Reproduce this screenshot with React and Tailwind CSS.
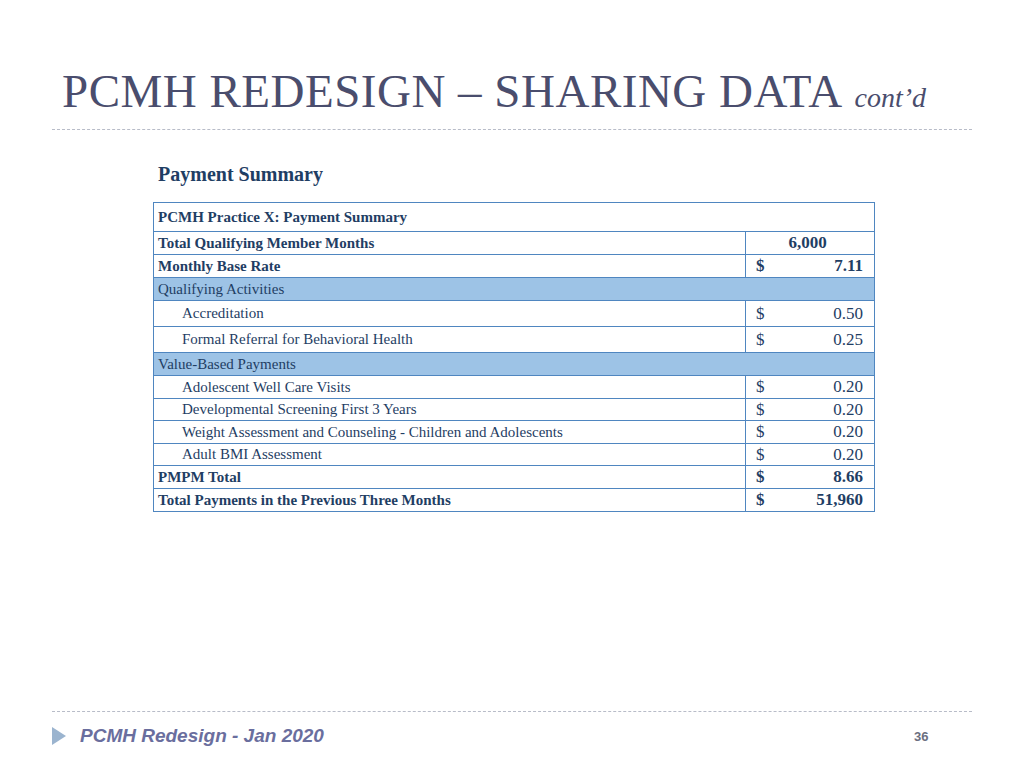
const rows = [
  { label: 'Total Qualifying Member Months', value: '6,000', bold: true, center: true, h: 'h-[23px]' },
  { label: 'Monthly Base Rate', dollar: true, value: '7.11', bold: true, h: 'h-[23px]' },
  { label: 'Qualifying Activities', band: true, h: 'h-[23px]' },
  { label: 'Accreditation', dollar: true, value: '0.50', indent: true, h: 'h-[26px]' },
  { label: 'Formal Referral for Behavioral Health', dollar: true, value: '0.25', indent: true, h: 'h-[26px]' },
  { label: 'Value-Based Payments', band: true, h: 'h-[23px]' },
  { label: 'Adolescent Well Care Visits', dollar: true, value: '0.20', indent: true, h: 'h-[23px]' },
  { label: 'Developmental Screening First 3 Years', dollar: true, value: '0.20', indent: true, h: 'h-[22px]' },
  { label: 'Weight Assessment and Counseling - Children and Adolescents', dollar: true, value: '0.20', indent: true, h: 'h-[23px]' },
  { label: 'Adult BMI Assessment', dollar: true, value: '0.20', indent: true, h: 'h-[22px]' },
  { label: 'PMPM Total', dollar: true, value: '8.66', bold: true, h: 'h-[23px]' },
  { label: 'Total Payments in the Previous Three Months', dollar: true, value: '51,960', bold: true, h: 'h-[22px]' },
];

const App = () => {
  return (
    <div className="w-[1024px] h-[768px] bg-white relative overflow-hidden" style={{ fontFamily: '"Liberation Serif", serif' }}>
      <div className="pt-[68px] pl-[62px] flex items-baseline text-[#4a4d6d]">
        <span className="text-[47px] leading-none tracking-[0.5px]">PCMH REDESIGN – SHARING DATA</span>
        <span className="text-[28px] italic ml-3 leading-none">cont’d</span>
      </div>
      <div className="mx-[52px] mt-[14px] border-t border-dashed border-[#b8bcc8]" />

      <div className="ml-[158px] mt-[34px] text-[#1f3e64] font-bold text-[20px] leading-none">Payment Summary</div>

      <div className="ml-[153px] mt-[18px] w-[722px] border border-[#4f86c0] text-[#1f3e64]">
        <div className="h-[29px] flex items-center px-1 font-bold text-[15px] border-b border-[#4f86c0]">PCMH Practice X: Payment Summary</div>
        {rows.map((r, i) => (
          <div
            key={i}
            className={`flex ${r.h} text-[15px] ${i < rows.length - 1 ? 'border-b border-[#4f86c0]' : ''} ${r.band ? 'bg-[#9dc3e6]' : ''} ${r.bold ? 'font-bold' : ''}`}
          >
            <div className={`flex-1 flex items-center ${r.indent ? 'pl-[28px]' : 'pl-1'}`}>{r.label}</div>
            {!r.band && (
              <div className="w-[129px] border-l border-[#4f86c0] flex items-center pl-[10px] pr-[11px] text-[17px]">
                {r.center ? (
                  <span className="flex-1 text-center pr-[4px]">{r.value}</span>
                ) : (
                  <>
                    <span>{r.dollar ? '$' : ''}</span>
                    <span className="flex-1 text-right">{r.value}</span>
                  </>
                )}
              </div>
            )}
          </div>
        ))}
      </div>

      <div className="absolute left-[52px] right-[52px] top-[711px] border-t border-dashed border-[#b8bcc8]" />
      <div className="absolute left-[52px] top-[722px] flex items-center">
        <svg width="14" height="18" viewBox="0 0 14 18"><polygon points="0,0 14,9 0,18" fill="#9bb4cf" /></svg>
        <span className="ml-[14px] italic font-bold text-[19px] text-[#6a6e9e]" style={{ fontFamily: '"Liberation Sans", sans-serif' }}>PCMH Redesign - Jan 2020</span>
      </div>
      <div className="absolute left-[914px] top-[727px] text-[13px] font-bold text-[#6b6f80]" style={{ fontFamily: '"Liberation Sans", sans-serif' }}>36</div>
    </div>
  );
};

export default App;
